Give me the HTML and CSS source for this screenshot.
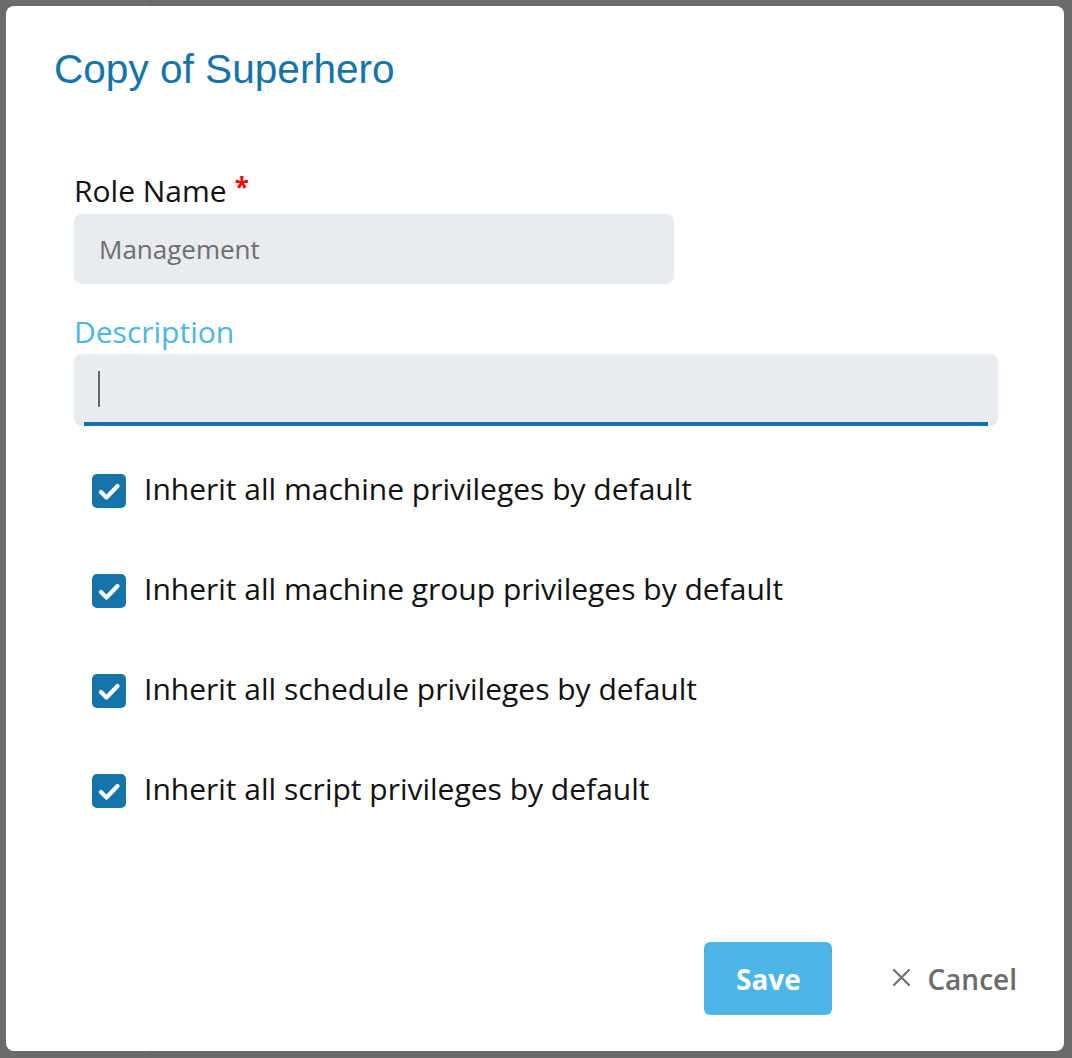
FILE: index.html
```html
<!DOCTYPE html>
<html>
<head>
<meta charset="utf-8">
<link rel="stylesheet" href="styles.css">
</head>
<body>
<div class="dialog">
  <h1 class="title">Copy of Superhero</h1>
  <div class="form">
    <div class="label">Role Name<span class="req">*</span></div>
    <div class="field field-role"><span class="placeholder">Management</span></div>
    <div class="label label-active">Description</div>
    <div class="field field-desc"><span class="caret"></span></div>
    <div class="checks">
      <div class="check-row">
        <svg class="box" width="34" height="34" viewBox="0 0 34 34"><rect width="34" height="34" rx="5" fill="#1474a8"/><path d="M9 18 L14.5 23.5 L25.5 12" fill="none" stroke="#fff" stroke-width="4.2" stroke-linecap="round" stroke-linejoin="round"/></svg>
        <span class="check-label">Inherit all machine privileges by default</span>
      </div>
      <div class="check-row">
        <svg class="box" width="34" height="34" viewBox="0 0 34 34"><rect width="34" height="34" rx="5" fill="#1474a8"/><path d="M9 18 L14.5 23.5 L25.5 12" fill="none" stroke="#fff" stroke-width="4.2" stroke-linecap="round" stroke-linejoin="round"/></svg>
        <span class="check-label">Inherit all machine group privileges by default</span>
      </div>
      <div class="check-row">
        <svg class="box" width="34" height="34" viewBox="0 0 34 34"><rect width="34" height="34" rx="5" fill="#1474a8"/><path d="M9 18 L14.5 23.5 L25.5 12" fill="none" stroke="#fff" stroke-width="4.2" stroke-linecap="round" stroke-linejoin="round"/></svg>
        <span class="check-label">Inherit all schedule privileges by default</span>
      </div>
      <div class="check-row">
        <svg class="box" width="34" height="34" viewBox="0 0 34 34"><rect width="34" height="34" rx="5" fill="#1474a8"/><path d="M9 18 L14.5 23.5 L25.5 12" fill="none" stroke="#fff" stroke-width="4.2" stroke-linecap="round" stroke-linejoin="round"/></svg>
        <span class="check-label">Inherit all script privileges by default</span>
      </div>
    </div>
  </div>
  <div class="footer">
    <button class="btn-save">Save</button>
    <button class="btn-cancel">
      <svg width="19" height="19" viewBox="0 0 19 19"><path d="M2 2 L17 17 M17 2 L2 17" stroke="#707070" stroke-width="2.2" stroke-linecap="round"/></svg>
      <span>Cancel</span>
    </button>
  </div>
</div>
</body>
</html>
```

FILE: styles.css
```css
html, body {
  margin: 0;
  padding: 0;
}
body {
  width: 1072px;
  height: 1058px;
  background-color: #6b6b6b;
  background-image: linear-gradient(to right, transparent 150px, #626262 150px, #626262 151px, transparent 151px);
  padding: 6px 8px 7px 6px;
  box-sizing: border-box;
  font-family: "Open Sans", "Noto Sans", sans-serif;
}
.dialog {
  width: 1058px;
  height: 1045px;
  box-sizing: border-box;
  background: #fff;
  border-radius: 8px;
  padding: 40px 47px 36px 47px;
  display: flex;
  flex-direction: column;
}
.title {
  margin: 0 0 0 1px;
  font-family: "Liberation Sans", Arial, sans-serif;
  font-weight: 400;
  font-size: 40.6px;
  line-height: 47px;
  color: #1474a8;
}
.form {
  margin: 78px 19px 0 21px;
  display: flex;
  flex-direction: column;
}
.label {
  font-size: 30px;
  line-height: 40px;
  color: #111;
  margin-bottom: 3px;
}
.label-active {
  color: #4ab5e6;
  margin-top: 28px;
  margin-bottom: 2px;
}
.req {
  color: #f00;
  font-weight: 700;
  font-size: 26px;
  vertical-align: top;
  position: relative;
  top: -4px;
  margin-left: 8px;
}
.field {
  background: #e8ebef;
  border-radius: 8px;
  box-sizing: border-box;
  display: flex;
  align-items: center;
  position: relative;
}
.field-role {
  width: 600px;
  height: 70px;
  padding-left: 25px;
}
.placeholder {
  font-size: 26px;
  color: #6e6e6e;
}
.field-desc {
  width: 100%;
  height: 72px;
  padding-left: 24px;
}
.field-desc::after {
  content: "";
  position: absolute;
  left: 10px;
  right: 10px;
  bottom: 0;
  height: 4px;
  background: #1474a8;
}
.caret {
  width: 2px;
  height: 36px;
  background: #666;
  margin-bottom: 2px;
}
.checks {
  margin-top: 45px;
  padding-left: 18px;
  display: flex;
  flex-direction: column;
  gap: 60px;
}
.check-row {
  display: flex;
  align-items: center;
  height: 40px;
  gap: 18px;
}
.box {
  flex: none;
  display: block;
}
.check-label {
  font-size: 30px;
  line-height: 40px;
  color: #111;
  position: relative;
  top: -2px;
}
.footer {
  margin-top: auto;
  display: flex;
  justify-content: flex-end;
  align-items: center;
  gap: 60px;
  margin-right: 0;
}
.btn-save {
  width: 128px;
  height: 73px;
  border: none;
  border-radius: 6px;
  background: #4bb5e6;
  color: #fff;
  font-family: "Open Sans", "Noto Sans", sans-serif;
  font-weight: 700;
  font-size: 28px;
  padding: 0;
}
.btn-cancel {
  border: none;
  background: none;
  padding: 0;
  display: flex;
  align-items: center;
  gap: 16px;
  font-family: "Open Sans", "Noto Sans", sans-serif;
  font-weight: 600;
  font-size: 28px;
  color: #6b6b6b;
}
.btn-cancel svg {
  display: block;
  position: relative;
  top: -1px;
}
```
